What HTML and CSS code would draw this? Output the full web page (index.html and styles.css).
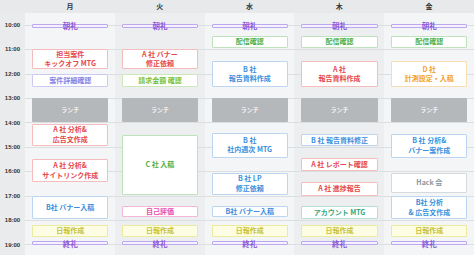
FILE: index.html
```html
<!DOCTYPE html>
<html lang="ja">
<head>
<meta charset="utf-8">
<link rel="stylesheet" href="styles.css">
</head>
<body>
<div class="cal">
  <div class="head">
    <div class="corner"></div>
    <div class="hday">月</div>
    <div class="hday">火</div>
    <div class="hday">水</div>
    <div class="hday">木</div>
    <div class="hday">金</div>
  </div>
  <div class="body">
    <div class="times">
      <div class="t">10:00</div><div class="t">11:00</div><div class="t">12:00</div><div class="t">13:00</div><div class="t">14:00</div>
      <div class="t">15:00</div><div class="t">16:00</div><div class="t">17:00</div><div class="t">18:00</div><div class="t">19:00</div>
    </div>

    <div class="day light">
      <div class="ev purple" style="grid-row: 27 / 37">朝礼</div>
      <div class="ev red" style="grid-row: 89 / 140">担当案件<br>キックオフ MTG</div>
      <div class="ev lavender" style="grid-row: 150 / 184">案件詳細確認</div>
      <div class="ev lunch" style="grid-row: 210 / 269">ランチ</div>
      <div class="ev red" style="grid-row: 273 / 329">A 社 分析&amp;<br>広告文作成</div>
      <div class="ev red" style="grid-row: 361 / 418">A 社 分析&amp;<br>サイトリンク作成</div>
      <div class="ev blue" style="grid-row: 451 / 509">B社 バナー入稿</div>
      <div class="ev yellow" style="grid-row: 522 / 553">日報作成</div>
      <div class="ev purple" style="grid-row: 563 / 573">終礼</div>
    </div>

    <div class="day dark">
      <div class="ev purple" style="grid-row: 27 / 37">朝礼</div>
      <div class="ev red" style="grid-row: 89 / 140">A 社 バナー<br>修正依頼</div>
      <div class="ev lime" style="grid-row: 150 / 184">請求金額 確認</div>
      <div class="ev lunch" style="grid-row: 210 / 269">ランチ</div>
      <div class="ev green" style="grid-row: 301 / 450">C 社 入稿</div>
      <div class="ev pink" style="grid-row: 477 / 503">自己評価</div>
      <div class="ev yellow" style="grid-row: 522 / 553">日報作成</div>
      <div class="ev purple" style="grid-row: 563 / 573">終礼</div>
    </div>

    <div class="day light">
      <div class="ev purple" style="grid-row: 27 / 37">朝礼</div>
      <div class="ev green" style="grid-row: 57 / 87">配信確認</div>
      <div class="ev blue" style="grid-row: 120 / 184">B 社<br>報告資料作成</div>
      <div class="ev lunch" style="grid-row: 210 / 269">ランチ</div>
      <div class="ev blue" style="grid-row: 296 / 357">B 社<br>社内週次 MTG</div>
      <div class="ev blue" style="grid-row: 394 / 449">B 社 LP<br>修正依頼</div>
      <div class="ev blue" style="grid-row: 477 / 503">B社 バナー入稿</div>
      <div class="ev yellow" style="grid-row: 522 / 553">日報作成</div>
      <div class="ev purple" style="grid-row: 563 / 573">終礼</div>
    </div>

    <div class="day dark">
      <div class="ev purple" style="grid-row: 27 / 37">朝礼</div>
      <div class="ev green" style="grid-row: 57 / 87">配信確認</div>
      <div class="ev red" style="grid-row: 120 / 184">A 社<br>報告資料作成</div>
      <div class="ev lunch" style="grid-row: 210 / 269">ランチ</div>
      <div class="ev blue" style="grid-row: 300 / 329">B 社 報告資料修正</div>
      <div class="ev red" style="grid-row: 359 / 390">A 社 レポート確認</div>
      <div class="ev red" style="grid-row: 417 / 451">A 社 進捗報告</div>
      <div class="ev teal" style="grid-row: 477 / 509">アカウント MTG</div>
      <div class="ev yellow" style="grid-row: 522 / 553">日報作成</div>
      <div class="ev purple" style="grid-row: 563 / 573">終礼</div>
    </div>

    <div class="day light">
      <div class="ev purple" style="grid-row: 27 / 37">朝礼</div>
      <div class="ev green" style="grid-row: 57 / 87">配信確認</div>
      <div class="ev orange" style="grid-row: 120 / 184">D 社<br>計測設定・入稿</div>
      <div class="ev lunch" style="grid-row: 210 / 269">ランチ</div>
      <div class="ev blue" style="grid-row: 298 / 359">B 社 分析&amp;<br>バナー案作成</div>
      <div class="ev gray" style="grid-row: 394 / 444">Hack 会</div>
      <div class="ev blue" style="grid-row: 451 / 509">B社 分析<br>&amp; 広告文作成</div>
      <div class="ev yellow" style="grid-row: 522 / 553">日報作成</div>
      <div class="ev purple" style="grid-row: 563 / 573">終礼</div>
    </div>
  </div>
</div>
</body>
</html>
```

FILE: styles.css
```css
html, body {
  margin: 0;
  padding: 0;
  overflow: hidden;
}
body {
  background: #e9ebed;
  font-family: "Noto Sans CJK JP", "Noto Sans", sans-serif;
  color: #333;
}
.cal {
  width: 474px;
  height: 255px;
  overflow: hidden;
}
.head {
  display: flex;
  height: 13px;
  background: #e7e9eb;
}
.corner {
  width: 25px;
  flex: none;
}
.hday {
  flex: 1;
  text-align: center;
  font-size: 7px;
  font-weight: 700;
  line-height: 12px;
  color: #333;
}
.body {
  display: flex;
}
.times {
  width: 25px;
  flex: none;
  display: flex;
  flex-direction: column;
  background: #e9ebed;
}
.t {
  height: 24.42px;
  line-height: 24.42px;
  text-align: center;
  font-family: "Liberation Sans", Arial, sans-serif;
  font-weight: 700;
  font-size: 6px;
  color: #333;
}
.day {
  flex: 1;
  min-width: 0;
  display: grid;
  grid-template-rows: repeat(600, 0.407px);
  grid-template-columns: 1fr;
  padding: 0 6.5px 0 7px;
  background-image: repeating-linear-gradient(to bottom,
    transparent 0, transparent 11.71px,
    #dcdfe2 11.71px, #dcdfe2 12.71px,
    transparent 12.71px, transparent 24.42px);
}
.day.light { background-color: #f4f5f6; }
.day.dark { background-color: #eceef0; }

.ev {
  grid-column: 1;
  min-height: 0;
  box-sizing: border-box;
  display: flex;
  align-items: center;
  justify-content: center;
  text-align: center;
  background: #fff;
  border: 1px solid #ccc;
  border-radius: 1px;
  font-size: 7px;
  font-weight: 700;
  line-height: 9.6px;
  white-space: nowrap;
  overflow: visible;
}
.ev.red { color: #e6484b; border-color: #f5bcbc; }
.ev.blue { color: #3c8fdd; border-color: #bcd6f1; }
.ev.green { color: #4fb04b; border-color: #bfe2bc; }
.ev.lime { color: #76c140; border-color: #cde8b8; }
.ev.teal { color: #33a77c; border-color: #b5e0cf; }
.ev.orange { color: #f2a12c; border-color: #f8dcb2; }
.ev.pink { color: #e64fae; border-color: #f4b7dc; }
.ev.gray { color: #8d949b; border-color: #d6dadd; }
.ev.lavender { color: #8282e4; border-color: #cacaf3; }
.ev.yellow { color: #c7c23a; border-color: #ebeb9f; background: #fdfde4; }
.ev.purple { color: #8b58d8; border-color: #bba8ee; background: #f5f1fe; font-size: 7.5px; }
.ev.lunch {
  background: #b5b8bb;
  border: none;
  color: #fff;
  font-size: 6px;
  font-weight: 500;
}
```
